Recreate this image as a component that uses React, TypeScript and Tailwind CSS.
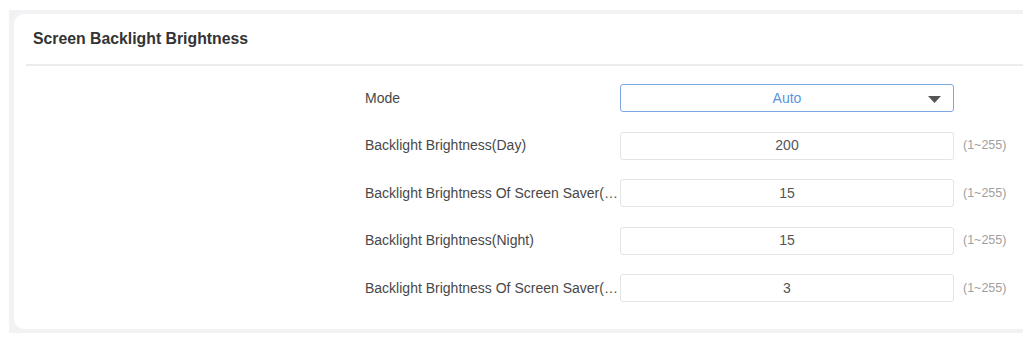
import React from "react";

const rows = [
  { label: "Backlight Brightness(Day)", value: "200" },
  { label: "Backlight Brightness Of Screen Saver(Day)", value: "15" },
  { label: "Backlight Brightness(Night)", value: "15" },
  { label: "Backlight Brightness Of Screen Saver(Night)", value: "3" },
];

export default function App() {
  return (
    <div
      className="w-[1034px] h-[348px] bg-white pt-[10px] pl-[9px] pr-[11px]"
      style={{ fontFamily: '"Liberation Sans", Arial, sans-serif' }}
    >
      <div className="bg-[#f2f2f4] pt-[4px] pl-[5px] pb-[4px] h-[323px]">
        <div className="bg-white rounded-tl-[10px] rounded-bl-[10px] h-full">
          <div className="h-[50px] flex items-center pl-[19px] text-[15.8px] font-bold text-[#333]">
            Screen Backlight Brightness
          </div>
          <div className="ml-[12px] h-[2px] bg-[#ececee]" />
          <div className="pl-[351px] pt-[18px] flex flex-col gap-[19.5px]">
            <div className="flex items-center h-[28px]">
              <div className="w-[255px] text-[14px] text-[#484848] truncate">Mode</div>
              <div className="relative w-[334px] h-[28px] border border-[#7ea6e0] rounded-[3px] flex items-center justify-center text-[14px] text-[#5b95e0]">
                Auto
                <svg
                  className="absolute right-[12px] top-[11px]"
                  width="13"
                  height="7"
                  viewBox="0 0 13 7"
                >
                  <path d="M0 0 L13 0 L6.5 7 Z" fill="#555" />
                </svg>
              </div>
            </div>
            {rows.map((r, i) => (
              <div key={i} className="flex items-center h-[28px]">
                <div
                  className="w-[255px] text-[14px] text-[#484848] whitespace-nowrap overflow-hidden text-ellipsis"
                  title={r.label}
                >
                  {r.label}
                </div>
                <div className="w-[334px] h-[28px] border border-[#e4e4e6] rounded-[3px] flex items-center justify-center text-[14px] text-[#555]">
                  {r.value}
                </div>
                <div className="ml-[9px] text-[12.5px] text-[#a0a0a0]">(1~255)</div>
              </div>
            ))}
          </div>
        </div>
      </div>
    </div>
  );
}
